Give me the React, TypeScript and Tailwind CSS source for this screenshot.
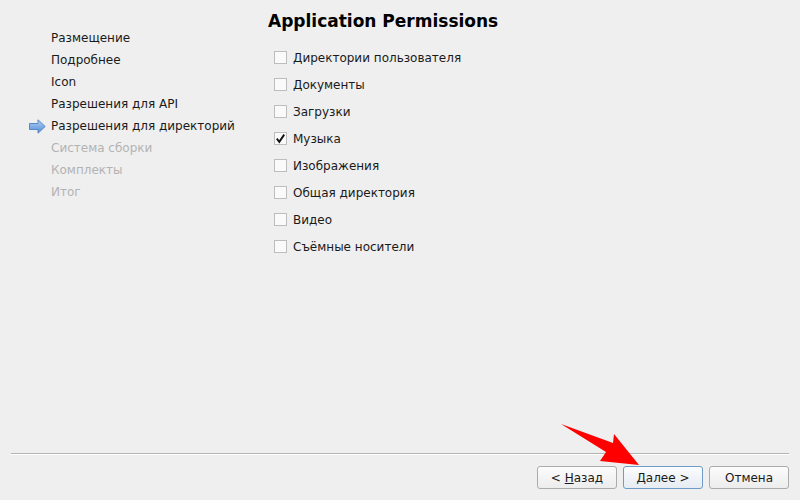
import React from "react";

const steps = [
  { label: "Размещение", state: "done" },
  { label: "Подробнее", state: "done" },
  { label: "Icon", state: "done" },
  { label: "Разрешения для API", state: "done" },
  { label: "Разрешения для директорий", state: "current" },
  { label: "Система сборки", state: "todo" },
  { label: "Комплекты", state: "todo" },
  { label: "Итог", state: "todo" },
];

const perms = [
  { label: "Директории пользователя", checked: false },
  { label: "Документы", checked: false },
  { label: "Загрузки", checked: false },
  { label: "Музыка", checked: true },
  { label: "Изображения", checked: false },
  { label: "Общая директория", checked: false },
  { label: "Видео", checked: false },
  { label: "Съёмные носители", checked: false },
];

function StepArrow() {
  return (
    <svg width="17" height="15" viewBox="0 0 17 15" className="shrink-0">
      <defs>
        <linearGradient id="ag" x1="0" y1="0" x2="0" y2="1">
          <stop offset="0" stopColor="#b5d2f5" />
          <stop offset="1" stopColor="#4f8ad6" />
        </linearGradient>
      </defs>
      <path d="M0.5 4.5 H9 V0.8 L16.2 7.5 L9 14.2 V10.5 H0.5 Z" fill="url(#ag)" stroke="#5a88c4" strokeWidth="1" strokeLinejoin="round" />
    </svg>
  );
}

function Checkbox({ checked }: { checked: boolean }) {
  return (
    <span className="w-[13px] h-[13px] border border-[#bdbdbd] bg-[#fafafa] flex items-center justify-center shrink-0">
      {checked && (
        <svg width="11" height="11" viewBox="0 0 11 11">
          <path d="M1.8 5.6 L4.3 8.8 L9.2 1.6" fill="none" stroke="#111" strokeWidth="1.9" />
        </svg>
      )}
    </span>
  );
}

function Button({ children, primary }: { children: React.ReactNode; primary?: boolean }) {
  return (
    <button
      className={
        primary
          ? "w-[80px] h-[23px] rounded-[3px] border border-[#6f9bc6] bg-gradient-to-b from-[#fbfcfe] to-[#e6ecf2] text-[12px] text-[#1a1a1a]"
          : "w-[80px] h-[23px] rounded-[3px] border border-[#ababab] bg-gradient-to-b from-[#fcfcfc] to-[#ececec] text-[12px] text-[#1a1a1a]"
      }
    >
      {children}
    </button>
  );
}

export default function App() {
  return (
    <div className="relative w-[800px] h-[500px] bg-[#efefef] flex flex-col overflow-hidden" style={{ fontFamily: '"DejaVu Sans", sans-serif' }}>
      <div className="flex flex-1">
        {/* Wizard steps */}
        <div className="w-[268px] pt-[27px] pl-[29px]">
          {steps.map(s => (
            <div key={s.label} className="h-[22px] flex items-center text-[12px]">
              <span className="w-[22px] flex items-center">{s.state === "current" && <StepArrow />}</span>
              <span className={s.state === "todo" ? "text-[#b3b3b3]" : "text-[#1a1a1a]"}>{s.label}</span>
            </div>
          ))}
        </div>

        {/* Page */}
        <div className="flex-1 pt-[11px]">
          <h1 className="text-[17px] font-bold text-black leading-[21px]">Application Permissions</h1>
          <div className="mt-[12px] pl-[6px]">
            {perms.map(p => (
              <div key={p.label} className="h-[27px] flex items-center gap-[6px] text-[12px] text-[#1a1a1a]">
                <Checkbox checked={p.checked} />
                <span>{p.label}</span>
              </div>
            ))}
          </div>
        </div>
      </div>

      {/* Footer */}
      <div className="px-[11px]">
        <div className="h-px bg-[#b4b4b4]" />
        <div className="h-px bg-white" />
      </div>
      <div className="h-[45px] flex items-start justify-end gap-[6px] pt-[11px] pr-[11px]">
        <Button>&lt; <span className="underline">Н</span>азад</Button>
        <Button primary><span className="underline">Д</span>алее &gt;</Button>
        <Button>Отмена</Button>
      </div>

      {/* Red annotation arrow */}
      <svg className="absolute left-0 top-0 pointer-events-none" width="800" height="500">
        <polygon points="561,424 613,443 614,434 639,465 600,461 606,452" fill="#ff0000" />
      </svg>
    </div>
  );
}
